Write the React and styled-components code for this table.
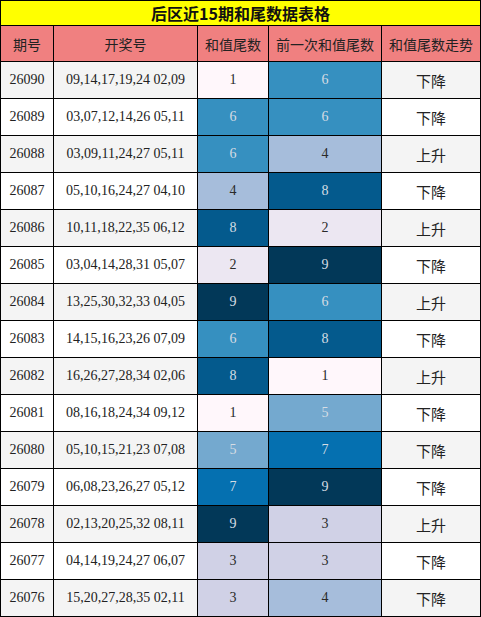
import React from "react";
import styled, { createGlobalStyle } from "styled-components";

const GlobalStyle = createGlobalStyle`
  html, body {
    margin: 0;
    padding: 0;
    background: #ffffff;
  }
`;

// PuBu scale, index = tail digit
const scale = [
  "#ffffff",
  "#fff7fb",
  "#ece7f2",
  "#d0d1e6",
  "#a6bddb",
  "#74a9cf",
  "#3690c0",
  "#0570b0",
  "#045a8d",
  "#023858"
];

const rows = [
  ["26090", "09,14,17,19,24 02,09", 1, 6, "下降"],
  ["26089", "03,07,12,14,26 05,11", 6, 6, "下降"],
  ["26088", "03,09,11,24,27 05,11", 6, 4, "上升"],
  ["26087", "05,10,16,24,27 04,10", 4, 8, "下降"],
  ["26086", "10,11,18,22,35 06,12", 8, 2, "上升"],
  ["26085", "03,04,14,28,31 05,07", 2, 9, "下降"],
  ["26084", "13,25,30,32,33 04,05", 9, 6, "上升"],
  ["26083", "14,15,16,23,26 07,09", 6, 8, "下降"],
  ["26082", "16,26,27,28,34 02,06", 8, 1, "上升"],
  ["26081", "08,16,18,24,34 09,12", 1, 5, "下降"],
  ["26080", "05,10,15,21,23 07,08", 5, 7, "下降"],
  ["26079", "06,08,23,26,27 05,12", 7, 9, "下降"],
  ["26078", "02,13,20,25,32 08,11", 9, 3, "上升"],
  ["26077", "04,14,19,24,27 06,07", 3, 3, "下降"],
  ["26076", "15,20,27,28,35 02,11", 3, 4, "下降"]
];

const Table = styled.div`
  display: grid;
  grid-template-columns: 52px 143px 70px 112px 98px;
  grid-template-rows: 24px 35px;
  grid-auto-rows: 36px;
  gap: 1px;
  padding: 1px;
  width: 481px;
  box-sizing: border-box;
  background: #000000;
`;

const Title = styled.div`
  grid-column: 1 / -1;
  display: flex;
  align-items: center;
  justify-content: center;
  background: #ffff00;
  color: #111111;
  font-family: "Noto Sans CJK SC", "Liberation Serif", serif;
  font-size: 16px;
  font-weight: 700;
`;

const Head = styled.div`
  display: flex;
  align-items: center;
  justify-content: center;
  background: #f08080;
  color: #222222;
  font-family: "Noto Sans CJK SC", sans-serif;
  font-size: 14px;
`;

const Cell = styled.div`
  display: flex;
  align-items: center;
  justify-content: center;
  background: ${(p) => (p.$odd ? "#f4f4f4" : "#ffffff")};
  color: #222222;
  font-family: "Liberation Serif", "Noto Sans CJK SC", serif;
  font-size: 14px;
`;

const Trend = styled(Cell)`
  font-family: "Noto Sans CJK SC", sans-serif;
  font-size: 15px;
`;

const Tail = styled.div`
  display: flex;
  align-items: center;
  justify-content: center;
  background: ${(p) => scale[p.$v]};
  color: ${(p) => (p.$v >= 5 ? "#d6dde4" : "#2a2a2a")};
  font-family: "Liberation Serif", serif;
  font-size: 14px;
`;

export default function App() {
  return (
    <>
      <GlobalStyle />
      <Table>
        <Title>后区近15期和尾数据表格</Title>
        <Head>期号</Head>
        <Head>开奖号</Head>
        <Head>和值尾数</Head>
        <Head>前一次和值尾数</Head>
        <Head>和值尾数走势</Head>
        {rows.map(([issue, nums, cur, prev, trend], i) => (
          <React.Fragment key={issue}>
            <Cell $odd={i % 2 === 0}>{issue}</Cell>
            <Cell $odd={i % 2 === 0}>{nums}</Cell>
            <Tail $v={cur}>{cur}</Tail>
            <Tail $v={prev}>{prev}</Tail>
            <Trend $odd={i % 2 === 0}>{trend}</Trend>
          </React.Fragment>
        ))}
      </Table>
    </>
  );
}
